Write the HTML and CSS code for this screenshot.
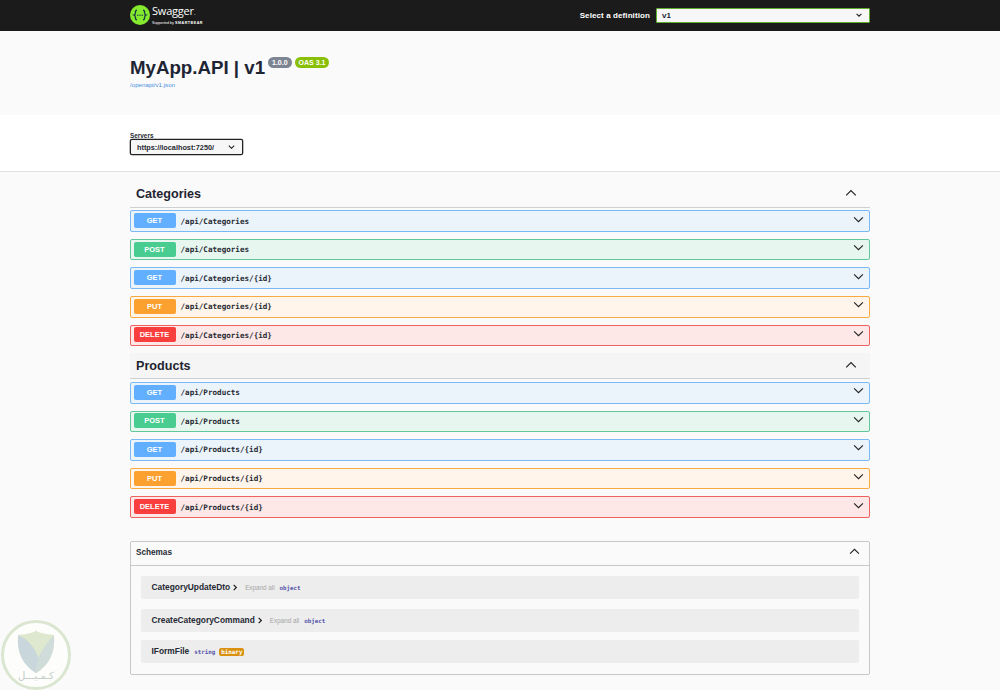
FILE: index.html
```html
<!DOCTYPE html>
<html lang="en">
<head>
<meta charset="utf-8">
<title>Swagger UI</title>
<link rel="stylesheet" href="styles.css">
</head>
<body>
<header class="topbar">
  <div class="wrap topbar-inner">
    <div class="logo">
      <svg class="logo-mark" viewBox="0 0 20 20" width="20" height="20" aria-hidden="true">
        <circle cx="10" cy="10" r="10" fill="#85ea2d"/>
        <path d="M7 5.2c-1.6 0-1.6 1-1.6 2.2 0 1.3-.4 2.3-1.4 2.6 1 .3 1.4 1.300 1.400 2.600 0 1.200 0 2.200 1.600 2.200M13 5.200c1.600 0 1.600 1 1.600 2.200 0 1.300.4 2.300 1.400 2.600-1 .3-1.400 1.300-1.400 2.600 0 1.200 0 2.200-1.600 2.200" fill="none" stroke="#173647" stroke-width="1.300"/>
        <circle cx="7.800" cy="10.200" r=".7" fill="#173647"/><circle cx="10" cy="10.200" r=".7" fill="#173647"/><circle cx="12.200" cy="10.200" r=".7" fill="#173647"/>
      </svg>
      <div class="logo-text">
        <span class="logo-name">Swagger<small>.</small></span>
        <span class="logo-sub">Supported by <b>SMARTBEAR</b></span>
      </div>
    </div>
    <div class="definition">
      <span class="definition-label">Select a definition</span>
      <div class="definition-select"><span>v1</span><svg class="select-chev" viewBox="0 0 10 6" width="6" height="4"><path d="M1 1l4 4 4-4" fill="none" stroke="#222" stroke-width="1.800"/></svg></div>
    </div>
  </div>
</header>

<section class="info">
  <div class="wrap">
    <div class="title-row">
      <h1 class="title">MyApp.API | v1</h1>
      <span class="badge badge-version">1.0.0</span>
      <span class="badge badge-oas">OAS 3.1</span>
    </div>
    <a class="spec-link">/openapi/v1.json</a>
  </div>
</section>

<section class="servers">
  <div class="wrap">
    <div class="servers-label">Servers</div>
    <div class="servers-select"><span>https://localhost:7250/</span><svg class="select-chev" viewBox="0 0 10 6" width="7" height="4"><path d="M1 1l4 4 4-4" fill="none" stroke="#222" stroke-width="1.600"/></svg></div>
  </div>
</section>

<main class="wrap ops">
  <div class="tag">
    <h3>Categories</h3>
    <svg class="arrow-up" viewBox="0 0 20 20" width="12" height="12"><path d="M2 14l8-8 8 8" fill="none" stroke="#222" stroke-width="2"/></svg>
  </div>
  <div class="op-list">
    <div class="op get"><span class="method">GET</span><span class="path">/api/Categories</span><svg class="arrow-down" viewBox="0 0 20 20" width="11" height="11"><path d="M2 6l8 8 8-8" fill="none" stroke="#222" stroke-width="2"/></svg></div>
    <div class="op post"><span class="method">POST</span><span class="path">/api/Categories</span><svg class="arrow-down" viewBox="0 0 20 20" width="11" height="11"><path d="M2 6l8 8 8-8" fill="none" stroke="#222" stroke-width="2"/></svg></div>
    <div class="op get"><span class="method">GET</span><span class="path">/api/Categories/{id}</span><svg class="arrow-down" viewBox="0 0 20 20" width="11" height="11"><path d="M2 6l8 8 8-8" fill="none" stroke="#222" stroke-width="2"/></svg></div>
    <div class="op put"><span class="method">PUT</span><span class="path">/api/Categories/{id}</span><svg class="arrow-down" viewBox="0 0 20 20" width="11" height="11"><path d="M2 6l8 8 8-8" fill="none" stroke="#222" stroke-width="2"/></svg></div>
    <div class="op delete"><span class="method">DELETE</span><span class="path">/api/Categories/{id}</span><svg class="arrow-down" viewBox="0 0 20 20" width="11" height="11"><path d="M2 6l8 8 8-8" fill="none" stroke="#222" stroke-width="2"/></svg></div>
  </div>

  <div class="tag tag-hover">
    <h3>Products</h3>
    <svg class="arrow-up" viewBox="0 0 20 20" width="12" height="12"><path d="M2 14l8-8 8 8" fill="none" stroke="#222" stroke-width="2"/></svg>
  </div>
  <div class="op-list">
    <div class="op get"><span class="method">GET</span><span class="path">/api/Products</span><svg class="arrow-down" viewBox="0 0 20 20" width="11" height="11"><path d="M2 6l8 8 8-8" fill="none" stroke="#222" stroke-width="2"/></svg></div>
    <div class="op post"><span class="method">POST</span><span class="path">/api/Products</span><svg class="arrow-down" viewBox="0 0 20 20" width="11" height="11"><path d="M2 6l8 8 8-8" fill="none" stroke="#222" stroke-width="2"/></svg></div>
    <div class="op get"><span class="method">GET</span><span class="path">/api/Products/{id}</span><svg class="arrow-down" viewBox="0 0 20 20" width="11" height="11"><path d="M2 6l8 8 8-8" fill="none" stroke="#222" stroke-width="2"/></svg></div>
    <div class="op put"><span class="method">PUT</span><span class="path">/api/Products/{id}</span><svg class="arrow-down" viewBox="0 0 20 20" width="11" height="11"><path d="M2 6l8 8 8-8" fill="none" stroke="#222" stroke-width="2"/></svg></div>
    <div class="op delete"><span class="method">DELETE</span><span class="path">/api/Products/{id}</span><svg class="arrow-down" viewBox="0 0 20 20" width="11" height="11"><path d="M2 6l8 8 8-8" fill="none" stroke="#222" stroke-width="2"/></svg></div>
  </div>

  <section class="schemas">
    <div class="schemas-head">
      <span>Schemas</span>
      <svg class="arrow-up" viewBox="0 0 20 20" width="11" height="11"><path d="M2 14l8-8 8 8" fill="none" stroke="#222" stroke-width="2"/></svg>
    </div>
    <div class="schemas-body">
      <div class="model model-first"><b>CategoryUpdateDto</b><svg class="model-chev" viewBox="0 0 6 10" width="4" height="7"><path d="M1 1l4 4-4 4" fill="none" stroke="#222" stroke-width="1.800"/></svg><span class="expand">Expand all</span><code class="type">object</code></div>
      <div class="model"><b>CreateCategoryCommand</b><svg class="model-chev" viewBox="0 0 6 10" width="4" height="7"><path d="M1 1l4 4-4 4" fill="none" stroke="#222" stroke-width="1.800"/></svg><span class="expand">Expand all</span><code class="type">object</code></div>
      <div class="model model-tight"><b>IFormFile</b><code class="type type-string">string</code><code class="format">binary</code></div>
    </div>
  </section>
</main>

<aside class="watermark" aria-hidden="true">
  <svg viewBox="0 0 70 70" width="70" height="70">
    <circle cx="35" cy="35" r="33.500" fill="#fdfdfb" stroke="#dbe6d0" stroke-width="3"/>
    <path d="M17 15q18 -2 18 -5q0 3 18 5q2 26 -18 38q-20 -12 -18 -38z" fill="#dde8cf"/>
    <path d="M17 15q14 6 20 22q2 8 0 15l-2 1q-20 -12 -18 -38z" fill="#c9d6dc"/>
    <path d="M53 15q2 26 -18 38q-2 -16 18 -38z" fill="#cfdcd9"/>
  </svg>
  <span class="watermark-text">كـمـيـــل</span>
</aside>
</body>
</html>
```
FILE: styles.css
```css
* { box-sizing: border-box; }
html, body { margin: 0; padding: 0; }
body {
  width: 1000px;
  height: 690px;
  overflow: hidden;
  background: #fafafa;
  font-family: "Liberation Sans", Arial, sans-serif;
  color: #262a33;
  position: relative;
}
.wrap { width: 740px; margin: 0 auto; }

.topbar { height: 31px; background: #1b1b1b; }
.topbar-inner { display: flex; align-items: center; justify-content: space-between; height: 30px; }
.logo { display: flex; align-items: center; gap: 2px; }
.logo-mark { display: block; }
.logo-text { display: flex; flex-direction: column; color: #fff; }
.logo-name { font-family: "Open Sans", sans-serif; font-size: 11px; line-height: 13px; letter-spacing: -.2px; }
.logo-name small { font-size: 6px; }
.logo-sub { font-size: 3.700px; line-height: 6px; white-space: nowrap; }
.logo-sub b { letter-spacing: .5px; }
.definition { display: flex; align-items: center; gap: 6px; }
.definition-label { color: #fff; font-size: 8px; font-weight: 700; letter-spacing: .1px; }
.definition-select {
  width: 214px;
  height: 15px;
  display: flex;
  align-items: center;
  justify-content: space-between;
  padding: 0 7px 0 5px;
  background: #f7f7f7;
  border: 1px solid #5fae2c;
  border-radius: 1px;
  font-size: 8px;
  font-weight: 700;
  color: #262a33;
}

.info { height: 84px; padding-top: 25px; }
.title-row { display: flex; align-items: flex-start; }
.title { margin: 0; font-size: 18.700px; line-height: 24px; font-weight: 700; color: #1d2433; }
.badge {
  margin-top: 1px;
  height: 11px;
  padding: 0 4px;
  border-radius: 6px;
  color: #fff;
  font-size: 7px;
  line-height: 11px;
  font-weight: 700;
}
.badge-version { margin-left: 3px; background: #7d8492; }
.badge-oas { margin-left: 3px; background: #89bf04; }
.spec-link { display: block; margin-top: 1px; font-size: 6.200px; line-height: 8px; color: #4990e2; }

.servers { height: 57px; padding-top: 17px; background: #fff; border-bottom: 1px solid #e3e3e3; }
.servers-label { font-size: 6.400px; line-height: 7px; font-weight: 700; color: #262a33; }
.servers-select {
  width: 113px;
  height: 16px;
  display: flex;
  align-items: center;
  justify-content: space-between;
  padding: 0 7px 0 6px;
  background: #f7f7f7;
  border: 1px solid #222;
  border-radius: 2px;
  box-shadow: 0 0 0 .3px #222;
  font-size: 7.300px;
  font-weight: 700;
  color: #262a33;
}

.ops { padding-top: 9px; }
.tag {
  height: 27px;
  display: flex;
  align-items: center;
  justify-content: space-between;
  padding: 0 13px 0 6px;
  border-bottom: 1px solid #cfd0d3;
}
.tag h3 { margin: 0; font-size: 12.600px; font-weight: 700; color: #1f2430; }
.tag-hover { height: 26px; background: #f5f5f5; margin-top: 7px; }
.op-list { display: flex; flex-direction: column; gap: 7px; margin-top: 2.300px; }
.tag-hover + .op-list { margin-top: 2.700px; }
.arrow-up, .arrow-down, .select-chev, .model-chev { display: block; flex: none; }
.arrow-down { margin-top: -4px; }
.arrow-up { margin-top: -2px; }

.op {
  height: 21.600px;
  display: flex;
  align-items: center;
  padding: 0 5px 0 2.500px;
  border: 1px solid;
  border-radius: 2px;
}
.method {
  width: 42px;
  height: 15px;
  margin-top: -1px;
  margin-right: 5px;
  border-radius: 2px;
  color: #fff;
  font-size: 7.500px;
  line-height: 15px;
  font-weight: 700;
  text-align: center;
}
.path {
  flex: 1;
  font-family: "DejaVu Sans Mono", "Liberation Mono", monospace;
  font-size: 7.600px;
  font-weight: 700;
  color: #262a33;
}
.get { background: #ebf3fb; border-color: #79b9f5; }
.get .method { background: #61affe; }
.post { background: #e8f6f0; border-color: #62c79a; }
.post .method { background: #49cc90; }
.put { background: #fff5ea; border-color: #f8a93f; }
.put .method { background: #fca130; }
.delete { background: #fde7e7; border-color: #ef6060; }
.delete .method { background: #f93e3e; }

.schemas {
  height: 134px;
  margin-top: 23.300px;
  border: 1px solid #c8c8c8;
  border-radius: 2px;
}
.schemas-head {
  height: 24px;
  display: flex;
  align-items: center;
  justify-content: space-between;
  padding: 0 9px 2px 5px;
  border-bottom: 1px solid #c8c8c8;
  font-size: 8.200px;
  font-weight: 700;
  color: #262a33;
}
.schemas-body { padding: 10px; }
.model {
  height: 23px;
  margin-bottom: 11px;
  display: flex;
  align-items: center;
  padding-left: 10.500px;
  background: #ededed;
  border-radius: 2px;
  font-size: 8.400px;
  color: #262a33;
}
.model b { margin-top: -1px; }
.model-tight { margin-bottom: 0; margin-top: -3px; }
.model-first { margin-bottom: 10px; }
.model-chev { margin-left: 3px; }
.expand { margin-left: 8px; font-size: 6.300px; color: #a6a6a6; }
.type {
  margin-left: 5px;
  font-family: "DejaVu Sans Mono", "Liberation Mono", monospace;
  font-size: 5.800px;
  font-weight: 700;
  color: #55a;
}
.type-string { margin-left: 5px; }
.format {
  margin-left: 4px;
  padding: 1px 2px;
  background: #d9900f;
  border-radius: 2px;
  color: #fff;
  font-family: "DejaVu Sans Mono", "Liberation Mono", monospace;
  font-size: 5.900px;
  font-weight: 700;
}

.watermark { position: absolute; left: 1px; top: 620px; width: 70px; height: 70px; }
.watermark svg { display: block; }
.watermark-text {
  position: absolute;
  left: 0;
  right: 0;
  top: 50px;
  text-align: center;
  font-family: "DejaVu Sans", sans-serif;
  font-size: 10px;
  line-height: 12px;
  color: #c4cdc9;
}
```
